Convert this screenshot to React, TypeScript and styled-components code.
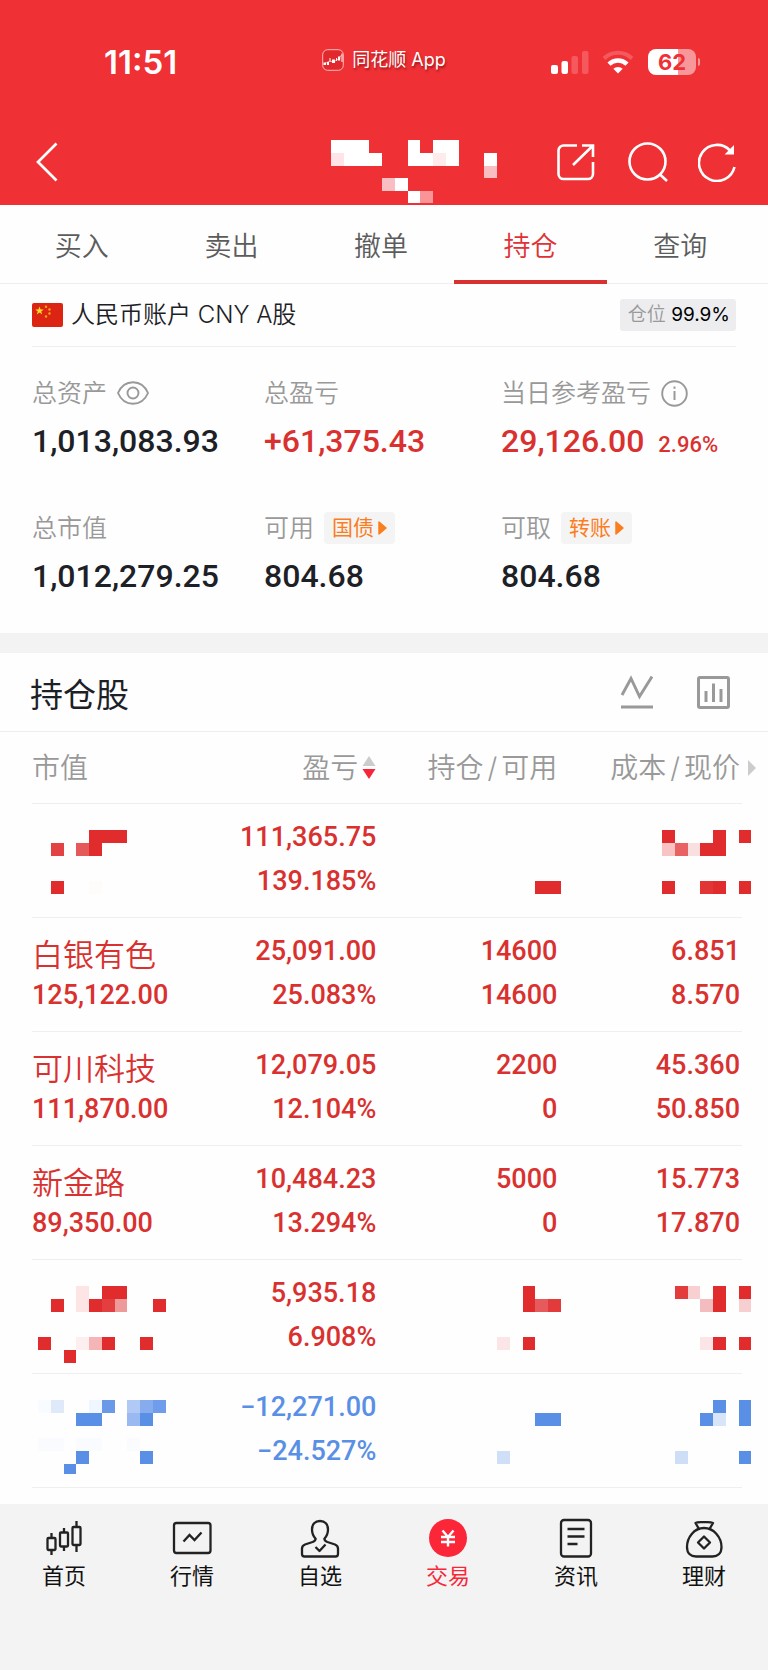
import React from 'react';
import styled, { createGlobalStyle } from 'styled-components';

const color = {
  brand: '#ef3035',
  rise: '#d9312f',
  fall: '#5a8fe6',
  block: '#e02c2d',
  ink: '#1d2126',
  muted: '#999',
  line: '#efefef',
  band: '#f3f3f3',
  page: '#fefefe',
  orange: '#fb7d1e',
};

const cjk = '"Noto Sans CJK SC", sans-serif';
const digits = 'Roboto, "Noto Sans CJK SC", sans-serif';

const GlobalStyle = createGlobalStyle`
  * { box-sizing: border-box; }
  body { margin: 0; background: ${color.page}; font-family: Inter, ${cjk}; color: ${color.ink}; }
  button { font: inherit; color: inherit; background: none; border: 0; padding: 0; margin: 0; cursor: pointer; }
  h1, h2, p, dl, dd { margin: 0; }
  svg { display: block; }
`;

const Page = styled.div`
  min-height: 100vh;
  display: flex;
  flex-direction: column;
`;

/* ---------- header ---------- */

const Header = styled.header`
  background: ${color.brand};
  color: #fff;
`;

const StatusBar = styled.div`
  display: grid;
  grid-template-columns: 1fr auto 1fr;
  align-items: center;
  height: 124px;
  padding: 0 72px 0 104px;
`;

const Clock = styled.time`
  font-size: 33px;
  line-height: 40px;
  font-weight: 600;
`;

const SourceApp = styled.div`
  display: flex;
  align-items: center;
  gap: 8px;
  margin-bottom: 4px;
  margin-left: -32px;
  font-size: 18px;
  line-height: 24px;
  text-shadow: 1px 2px 2px rgba(90, 0, 0, 0.5);
`;

const StatusIcons = styled.div`
  display: flex;
  align-items: center;
  justify-content: flex-end;
  gap: 13px;
`;

const Battery = styled.div`
  position: relative;
  width: 48px;
  height: 26px;
  margin-left: 1px;
  border-radius: 8px;
  background: linear-gradient(90deg, #fff 62%, #f8979a 62%);
  color: ${color.brand};
  font-size: 22px;
  line-height: 26px;
  font-weight: 700;
  text-align: center;

  &::after {
    content: '';
    position: absolute;
    left: 50px;
    top: 9px;
    width: 2px;
    height: 8px;
    border-radius: 0 2px 2px 0;
    background: #f8979a;
  }
`;

const TitleBar = styled.div`
  display: flex;
  align-items: center;
  height: 81px;
  padding: 0 32px 6px 36px;
`;

const AccountName = styled.h1`
  margin-left: auto;
  margin-right: 60px;
  align-self: flex-end;
  height: 59px;
`;

const TitleActions = styled.div`
  display: flex;
  align-items: center;
  gap: 30px;
`;

/* ---------- tabs ---------- */

const Tabs = styled.nav`
  display: grid;
  grid-template-columns: repeat(5, 1fr);
  height: 79px;
  padding: 0 13px 0 7px;
  border-bottom: 1px solid ${color.line};
`;

const Tab = styled.button<{ $active?: boolean }>`
  position: relative;
  font-family: ${cjk};
  font-size: 27px;
  line-height: 40px;
  font-weight: 350;
  padding-top: 2px;
  color: ${(p) => (p.$active ? '#e03234' : '#5c5c5c')};

  &::after {
    content: '';
    display: ${(p) => (p.$active ? 'block' : 'none')};
    position: absolute;
    left: -2px;
    right: -2px;
    bottom: -1px;
    height: 4px;
    background: ${color.rise};
  }
`;

/* ---------- account summary ---------- */

const Account = styled.section`
  padding: 0 32px;
  border-bottom: 20px solid ${color.band};
`;

const AccountHead = styled.div`
  display: flex;
  align-items: center;
  gap: 8px;
  height: 63px;
  border-bottom: 1px solid ${color.line};
`;

const AccountTitle = styled.h2`
  font-size: 24px;
  line-height: 32px;
  font-weight: 350;
`;

const PositionBadge = styled.p`
  margin-left: auto;
  padding: 0 6px 0 8px;
  border-radius: 3px;
  background: #ededf0;
  color: #000;
  font-size: 19px;
  line-height: 32px;

  span {
    color: ${color.muted};
    font-weight: 350;
  }
`;

const Figures = styled.dl`
  display: grid;
  grid-template-columns: 232fr 237fr 235fr;
  row-gap: 49px;
  padding: 30px 0 35px;
`;

const FigureLabel = styled.dt`
  display: flex;
  align-items: center;
  gap: 10px;
  height: 32px;
  margin-bottom: 10px;
  color: ${color.muted};
  font-size: 25px;
  line-height: 32px;
  font-weight: 350;
  white-space: nowrap;
`;

const FigureValue = styled.dd<{ $rise?: boolean }>`
  height: 44px;
  font-family: ${digits};
  font-size: 32px;
  line-height: 44px;
  font-weight: 500;
  white-space: nowrap;
  color: ${(p) => (p.$rise ? color.rise : color.ink)};

  small {
    margin-left: 14px;
    font-size: 22px;
    line-height: 24px;
  }
`;

const Tag = styled.button`
  display: flex;
  align-items: center;
  gap: 4px;
  height: 32px;
  padding: 0 8px;
  border-radius: 4px;
  background: #f4f4f4;
  color: ${color.orange};
  font-size: 21px;
  font-weight: 400;
`;

/* ---------- holdings ---------- */

const HoldingsHead = styled.div`
  display: flex;
  align-items: center;
  gap: 44px;
  height: 79px;
  padding: 0 38px 0 30px;
  border-bottom: 1px solid ${color.line};
`;

const HoldingsTitle = styled.h2`
  margin-right: auto;
  padding-top: 5px;
  font-size: 33px;
  line-height: 44px;
  font-weight: 400;
`;

const HoldingsBody = styled.div`
  padding: 0 26px 16px 32px;
`;

const Table = styled.table`
  width: 100%;
  table-layout: fixed;
  border-collapse: separate;
  border-spacing: 0;
`;

const HeadCell = styled.th<{ $start?: boolean; $inset?: boolean }>`
  position: relative;
  height: 72px;
  padding: 0 ${(p) => (p.$inset ? '2px' : '0')} 0 0;
  border-bottom: 1px solid ${color.line};
  color: ${color.muted};
  font-size: 28px;
  line-height: 40px;
  font-weight: 350;
  white-space: nowrap;
  text-align: ${(p) => (p.$start ? 'left' : 'right')};
`;

const Slash = styled.span`
  margin: 0 4px;
`;

const SortButton = styled.button`
  display: inline-flex;
  align-items: center;
  gap: 4px;
`;

const MoreColumns = styled.span`
  position: absolute;
  right: -14px;
  top: 28px;
`;

const Cell = styled.td<{ $tone: string; $start?: boolean; $inset?: boolean }>`
  height: 114px;
  padding: 11px ${(p) => (p.$inset ? '2px' : '0')} 14px 0;
  border-bottom: 1px solid ${color.line};
  vertical-align: top;
  color: ${(p) => p.$tone};
  font-family: ${digits};
  font-size: 27px;
  line-height: 45px;
  font-weight: 500;
  white-space: nowrap;
  text-align: ${(p) => (p.$start ? 'left' : 'right')};

  > div { height: 44px; }
`;

const MaskedCell = styled(Cell)<{ $overhang?: number }>`
  padding: 26px 0 0;

  svg {
    margin-left: ${(p) => (p.$start ? '6px' : 'auto')};
    margin-right: -${(p) => p.$overhang ?? 0}px;
  }
`;

const StockName = styled.div`
  font-family: ${cjk};
  font-size: 31px;
  line-height: 48px;
  font-weight: 350;
`;

/* ---------- bottom bar ---------- */

const BottomBar = styled.nav`
  flex: 1;
  display: grid;
  grid-template-columns: repeat(6, 1fr);
  align-items: start;
  padding: 14px 0 76px;
  background: ${color.band};
`;

const BottomItem = styled.button<{ $active?: boolean }>`
  display: flex;
  flex-direction: column;
  align-items: center;
  gap: 4px;
  color: ${(p) => (p.$active ? '#f5283a' : '#111')};
  font-size: 22px;
  line-height: 28px;
`;

/* ---------- mosaics that hide private values ---------- */

type Block = [x: number, y: number, fill: string, w?: number, h?: number];
const U = 12.75;

function Mosaic({ blocks, width, height }: { blocks: Block[]; width: number; height: number }) {
  return (
    <svg width={width} height={height} viewBox={`0 0 ${width} ${height}`} shapeRendering="crispEdges" aria-hidden="true">
      {blocks.map(([x, y, fill, w = 1, h = 1], i) => (
        <rect key={i} x={x * U} y={y * U} width={w * U} height={h * U} fill={fill} />
      ))}
    </svg>
  );
}

const R = color.block;
const B = color.fall;

const nameBlocks: Block[] = [
  [0, 0, '#fff', 3], [6, 0, '#fff'], [8, 0, '#fff', 2],
  [0, 1, '#ffe5e8'], [1, 1, '#fff', 3], [6, 1, '#fff', 2], [8, 1, '#ffeaec'], [9, 1, '#fff'],
  [12, 1, '#fff'], [12, 2, '#f9bec2'],
  [4, 3, '#f9bec2'], [5, 3, '#fff'], [6, 4, '#fff'], [7, 4, '#f99599'],
];

type Masked = { value: Block[]; amount: Block[]; price: Block[] };

const firstMask: Masked = {
  value: [[4, 0, R, 3], [1, 1, '#e34244'], [3, 1, '#e6595b'], [4, 1, R], [1, 4, R], [4, 4, '#fefbfb']],
  amount: [[3, 4, R, 2]],
  price: [
    [0, 0, R], [4, 0, R], [6, 0, R],
    [0, 1, '#f9c2c4'], [1, 1, '#e96263'], [2, 1, '#fadfe1'], [3, 1, R, 2],
    [0, 4, R], [3, 4, '#e23536'], [4, 4, R], [6, 4, R],
  ],
};

const riseMask: Masked = {
  value: [
    [3, 0, '#fde5e5', 1, 2], [5, 0, R, 2],
    [1, 1, R], [4, 1, R], [5, 1, '#e43f40'], [6, 1, '#ef9a9a'], [9, 1, R],
    [0, 4, R], [3, 4, '#fdefef'], [4, 4, '#f5b5b6'], [5, 4, R], [8, 4, R], [2, 5, R],
  ],
  amount: [[2, 0, R, 1, 2], [3, 1, '#e65a5b'], [4, 1, '#e33a3b'], [0, 4, '#fce5e6'], [2, 4, R]],
  price: [
    [1, 0, '#e33c3d'], [2, 0, '#f8d0d1'], [4, 0, R, 1, 2], [6, 0, R],
    [3, 1, '#f3bcbe'], [6, 1, '#f7cfd1'],
    [3, 4, '#fbe5e6'], [4, 4, R], [6, 4, R],
  ],
};

const fallMask: Masked = {
  value: [
    [0, 0, '#f8fbff'], [1, 0, '#deeafa'], [4, 0, '#f0f6ff'], [5, 0, '#6a99e8'],
    [7, 0, '#b0caf5'], [8, 0, '#87aced'], [9, 0, '#6f9ceb'],
    [3, 1, B, 2], [7, 1, '#9ab9f0'], [8, 1, B],
    [0, 3, '#f9fbff', 2], [3, 3, '#f9fbff', 2], [7, 3, '#f9fbff'],
    [3, 4, B], [8, 4, B], [2, 5, B, 1, 0.8],
  ],
  amount: [[3, 1, B, 2], [0, 4, '#cfdff7']],
  price: [[4, 0, B], [6, 0, B, 1, 2], [3, 1, B], [4, 1, '#d8e5f8'], [1, 4, '#cddef6'], [6, 4, B]],
};

type Holding = {
  profit: string;
  rate: string;
  tone: string;
  mask?: Masked;
  name?: string;
  value?: string;
  held?: string;
  free?: string;
  cost?: string;
  price?: string;
};

const holdings: Holding[] = [
  { profit: '111,365.75', rate: '139.185%', tone: color.rise, mask: firstMask },
  { name: '白银有色', value: '125,122.00', profit: '25,091.00', rate: '25.083%', held: '14600', free: '14600', cost: '6.851', price: '8.570', tone: color.rise },
  { name: '可川科技', value: '111,870.00', profit: '12,079.05', rate: '12.104%', held: '2200', free: '0', cost: '45.360', price: '50.850', tone: color.rise },
  { name: '新金路', value: '89,350.00', profit: '10,484.23', rate: '13.294%', held: '5000', free: '0', cost: '15.773', price: '17.870', tone: color.rise },
  { profit: '5,935.18', rate: '6.908%', tone: color.rise, mask: riseMask },
  { profit: '−12,271.00', rate: '−24.527%', tone: color.fall, mask: fallMask },
];

function HoldingRow({ item }: { item: Holding }) {
  const profit = (
    <Cell $tone={item.tone}>
      <div>{item.profit}</div>
      <div>{item.rate}</div>
    </Cell>
  );
  if (item.mask) {
    return (
      <tr>
        <MaskedCell $tone={item.tone} $start><Mosaic blocks={item.mask.value} width={128} height={77} /></MaskedCell>
        {profit}
        <MaskedCell $tone={item.tone} $overhang={4}><Mosaic blocks={item.mask.amount} width={64} height={77} /></MaskedCell>
        <MaskedCell $tone={item.tone} $overhang={10}><Mosaic blocks={item.mask.price} width={90} height={77} /></MaskedCell>
      </tr>
    );
  }
  return (
    <tr>
      <Cell $tone={item.tone} $start>
        <StockName>{item.name}</StockName>
        <div>{item.value}</div>
      </Cell>
      {profit}
      <Cell $tone={item.tone}>
        <div>{item.held}</div>
        <div>{item.free}</div>
      </Cell>
      <Cell $tone={item.tone} $inset>
        <div>{item.cost}</div>
        <div>{item.price}</div>
      </Cell>
    </tr>
  );
}

/* ---------- icons ---------- */

const TagArrow = () => (
  <svg width="9" height="14" viewBox="0 0 9 14"><path d="M1 1 L8 7 L1 13 Z" fill="currentColor" stroke="currentColor" strokeWidth="1.5" strokeLinejoin="round" /></svg>
);

const AppGlyph = () => (
  <svg width="22" height="22" viewBox="0 0 22 22">
    <rect x="0.7" y="0.7" width="20.6" height="20.6" rx="5" fill="#e0282d" stroke="#fbb" strokeWidth="1" />
    <path d="M1.500 13.500h2.500v2.500H1.500zM5 13h2v3H5zM10 10.500h3v3.500h-3zM16 7.500h2.200v4H16z" fill="#fff" />
    <path d="M8 9v4M14.500 9v3M20 4.500v8.500" stroke="#fff" strokeWidth="1" />
    <path d="M3 14.500l5-2.500 3.500 1 5-3 3-4" stroke="#fff" strokeWidth="0.600" fill="none" />
  </svg>
);

const Signal = () => (
  <svg width="38" height="23" viewBox="0 0 38 23">
    <rect x="0" y="14" width="7" height="9" rx="2" fill="#fff" />
    <rect x="10.500" y="10" width="6.500" height="13" rx="2" fill="#fff" />
    <rect x="20.500" y="5" width="6.500" height="18" rx="2" fill="#f5595d" />
    <rect x="31" y="0" width="6.500" height="23" rx="2" fill="#f5595d" />
  </svg>
);

const Wifi = () => (
  <svg width="32" height="24" viewBox="0 0 32 24">
    <path d="M2 8.500 A20 20 0 0 1 30 8.500" stroke="#f5595d" strokeWidth="4" fill="none" />
    <path d="M7 14.200 A13 13 0 0 1 25 14.200" stroke="#fff" strokeWidth="4.500" fill="none" />
    <path d="M16 23.500 L11.300 18.800 A6.800 6.800 0 0 1 20.700 18.800 Z" fill="#fff" />
  </svg>
);

const BackIcon = () => (
  <svg width="22" height="40" viewBox="0 0 22 40"><path d="M20.500 1.500 L2 20 L20.500 38.500" fill="none" stroke="#fff" strokeWidth="2.700" /></svg>
);

const ShareIcon = () => (
  <svg width="41" height="38" viewBox="0 0 41 38" fill="none" stroke="#fff" strokeWidth="2.600">
    <path d="M20 2.500H6.500a5 5 0 0 0-5 5V31a5 5 0 0 0 5 5H31a5 5 0 0 0 5-5V19" />
    <path d="M25 2.500h11V14M36 2.500 L16 22" />
  </svg>
);

const SearchIcon = () => (
  <svg width="40" height="40" viewBox="0 0 40 40" fill="none" stroke="#fff" strokeWidth="2.600">
    <circle cx="19.500" cy="19.500" r="18" />
    <path d="M31.500 32 L39 39" />
  </svg>
);

const RefreshIcon = () => (
  <svg width="38" height="40" viewBox="0 0 38 40" fill="none" stroke="#fff" strokeWidth="2.600">
    <path d="M36.500 25 A18 18 0 1 1 32 8.500" />
    <path d="M35 5.500V11.500H29Z" fill="#fff" strokeWidth="2" />
  </svg>
);

const Flag = () => (
  <svg width="31" height="24" viewBox="0 0 31 24">
    <rect width="31" height="24" rx="2" fill="#dc2412" />
    <path d="M7.500 3.500l1.100 3h3.100l-2.500 1.900 1 3.100-2.700-1.900-2.700 1.900 1-3.100-2.500-1.900h3.100z" fill="#fde021" />
    <g fill="#f3a31c"><circle cx="14" cy="3.800" r="1.200" /><circle cx="17.500" cy="6.500" r="1.200" /><circle cx="17.500" cy="10.500" r="1.200" /><circle cx="14" cy="13.500" r="1.200" /></g>
  </svg>
);

const Eye = () => (
  <svg width="32" height="24" viewBox="0 0 32 24" fill="none" stroke="#999" strokeWidth="1.900">
    <path d="M1 12C4 5 9.500 1.200 16 1.200S28 5 31 12C28 19 22.500 22.800 16 22.800S4 19 1 12Z" />
    <circle cx="16" cy="12" r="5.500" />
  </svg>
);

const Info = () => (
  <svg width="27" height="27" viewBox="0 0 27 27" fill="none" stroke="#999" strokeWidth="1.900">
    <circle cx="13.500" cy="13.500" r="12.300" />
    <path d="M13.500 11v9M13.500 6.500v2.200" strokeWidth="2" />
  </svg>
);

const TrendIcon = () => (
  <svg width="32" height="34" viewBox="0 0 32 34" fill="none" stroke="#999" strokeWidth="2.900">
    <path d="M1 20 L10 3.500 L18.500 21.500 L31 1.500" />
    <path d="M0 32h32" strokeWidth="3" />
  </svg>
);

const BarsIcon = () => (
  <svg width="33" height="33" viewBox="0 0 33 33" fill="none" stroke="#999" strokeWidth="3">
    <rect x="1.500" y="1.500" width="30" height="30" rx="1.500" />
    <path d="M9 26V15M16.500 26V7.500M24 26V13" />
  </svg>
);

const SortIcon = () => (
  <svg width="14" height="24" viewBox="0 0 14 24"><path d="M7 0l6.500 10H.5z" fill="#ccc" /><path d="M7 23L.5 13h13z" fill="#f8243a" /></svg>
);

const line = { fill: 'none', stroke: '#222', strokeWidth: 2.3 } as const;

const HomeIcon = () => (
  <svg width="40" height="40" viewBox="0 0 40 40" {...line}>
    <path d="M7.500 15v5M7.500 32v5M20 10v4M20 28v5M32.500 3v6M32.500 27v7" />
    <rect x="3.500" y="20" width="8" height="12" rx="1" /><rect x="16" y="14.500" width="8" height="14" rx="1" /><rect x="28.500" y="9" width="8" height="18" rx="1" />
  </svg>
);

const QuoteIcon = () => (
  <svg width="40" height="40" viewBox="0 0 40 40" {...line}>
    <rect x="2" y="5" width="36.500" height="30" rx="2.500" />
    <path d="M11.500 23.500l6-6.500 5 5 7-7.500" />
  </svg>
);

const WatchIcon = () => (
  <svg width="40" height="40" viewBox="0 0 40 40" {...line} strokeLinejoin="round">
    <path d="M20 3c-5 0-8 3.500-8 8.500 0 4 1.600 7 3.600 9.200 0 1.800-1.200 2.600-3 3.300L5 26.500c-2 .8-3 2-3 4V36c0 1.500.8 2.500 2.500 2.500h31c1.700 0 2.500-1 2.500-2.500v-5.500c0-2-1-3.200-3-4L27.400 24c-1.800-.7-3-1.500-3-3.300C26.400 18.500 28 15.500 28 11.500 28 6.500 25 3 20 3Z" />
    <path d="M15.500 29l4 4 6-6.500" />
  </svg>
);

const TradeIcon = () => (
  <svg width="40" height="40" viewBox="0 0 40 40" fill="none" stroke="#fff" strokeWidth="2.400">
    <circle cx="20" cy="20" r="19" fill="#fb2638" stroke="none" />
    <path d="M14.500 12.500L20 19L25.500 12.500M20 19v9.500M13 19h14M13 24h14" />
  </svg>
);

const NewsIcon = () => (
  <svg width="40" height="40" viewBox="0 0 40 40" {...line}>
    <rect x="5" y="2" width="30" height="36.500" rx="3" />
    <path d="M11.500 11h17M11.500 18.500h17M11.500 26h10" />
  </svg>
);

const WealthIcon = () => (
  <svg width="40" height="40" viewBox="0 0 40 40" {...line} strokeLinejoin="round">
    <path d="M15 11l-3.500-6c2-1.200 4.500-.8 8.500-.8s6.500-.4 9 .8L25.500 11" />
    <path d="M20 10C10 10 3 19.500 3 29c0 6.500 4 9.500 9 9.500h16.500c5 0 9-3 9-9.500C37.500 19.500 30 10 20 10Z" />
    <path d="M20 18.500l6 6-6 6-6-6z" />
  </svg>
);

const bottomItems = [
  { label: '首页', Icon: HomeIcon },
  { label: '行情', Icon: QuoteIcon },
  { label: '自选', Icon: WatchIcon },
  { label: '交易', Icon: TradeIcon, active: true },
  { label: '资讯', Icon: NewsIcon },
  { label: '理财', Icon: WealthIcon },
];

export default function App() {
  return (
    <Page>
      <GlobalStyle />
      <Header>
        <StatusBar>
          <Clock>11:51</Clock>
          <SourceApp><AppGlyph />同花顺 App</SourceApp>
          <StatusIcons><Signal /><Wifi /><Battery>62</Battery></StatusIcons>
        </StatusBar>
        <TitleBar>
          <button aria-label="返回"><BackIcon /></button>
          <AccountName><Mosaic blocks={nameBlocks} width={166} height={63} /></AccountName>
          <TitleActions>
            <button aria-label="分享"><ShareIcon /></button>
            <button aria-label="搜索"><SearchIcon /></button>
            <button aria-label="刷新"><RefreshIcon /></button>
          </TitleActions>
        </TitleBar>
      </Header>

      <Tabs>
        {['买入', '卖出', '撤单', '持仓', '查询'].map((t) => (
          <Tab key={t} $active={t === '持仓'}>{t}</Tab>
        ))}
      </Tabs>

      <Account>
        <AccountHead>
          <Flag />
          <AccountTitle>人民币账户 CNY A股</AccountTitle>
          <PositionBadge><span>仓位</span> 99.9%</PositionBadge>
        </AccountHead>
        <Figures>
          <div>
            <FigureLabel>总资产 <Eye /></FigureLabel>
            <FigureValue>1,013,083.93</FigureValue>
          </div>
          <div>
            <FigureLabel>总盈亏</FigureLabel>
            <FigureValue $rise>+61,375.43</FigureValue>
          </div>
          <div>
            <FigureLabel>当日参考盈亏 <Info /></FigureLabel>
            <FigureValue $rise>29,126.00<small>2.96%</small></FigureValue>
          </div>
          <div>
            <FigureLabel>总市值</FigureLabel>
            <FigureValue>1,012,279.25</FigureValue>
          </div>
          <div>
            <FigureLabel>可用 <Tag>国债<TagArrow /></Tag></FigureLabel>
            <FigureValue>804.68</FigureValue>
          </div>
          <div>
            <FigureLabel>可取 <Tag>转账<TagArrow /></Tag></FigureLabel>
            <FigureValue>804.68</FigureValue>
          </div>
        </Figures>
      </Account>

      <section>
        <HoldingsHead>
          <HoldingsTitle>持仓股</HoldingsTitle>
          <button aria-label="走势"><TrendIcon /></button>
          <button aria-label="统计"><BarsIcon /></button>
        </HoldingsHead>
        <HoldingsBody>
          <Table>
            <colgroup>
              <col style={{ width: '24%' }} />
              <col style={{ width: '24.5%' }} />
              <col style={{ width: '25.5%' }} />
              <col style={{ width: '26%' }} />
            </colgroup>
            <thead>
              <tr>
                <HeadCell $start>市值</HeadCell>
                <HeadCell><SortButton>盈亏<SortIcon /></SortButton></HeadCell>
                <HeadCell>持仓<Slash>/</Slash>可用</HeadCell>
                <HeadCell $inset>
                  成本<Slash>/</Slash>现价
                  <MoreColumns>
                    <svg width="8" height="16" viewBox="0 0 8 16"><path d="M0 0l8 8-8 8z" fill="#ccc" /></svg>
                  </MoreColumns>
                </HeadCell>
              </tr>
            </thead>
            <tbody>
              {holdings.map((item) => <HoldingRow key={item.profit} item={item} />)}
            </tbody>
          </Table>
        </HoldingsBody>
      </section>

      <BottomBar>
        {bottomItems.map(({ label, Icon, active }) => (
          <BottomItem key={label} $active={active}><Icon />{label}</BottomItem>
        ))}
      </BottomBar>
    </Page>
  );
}
